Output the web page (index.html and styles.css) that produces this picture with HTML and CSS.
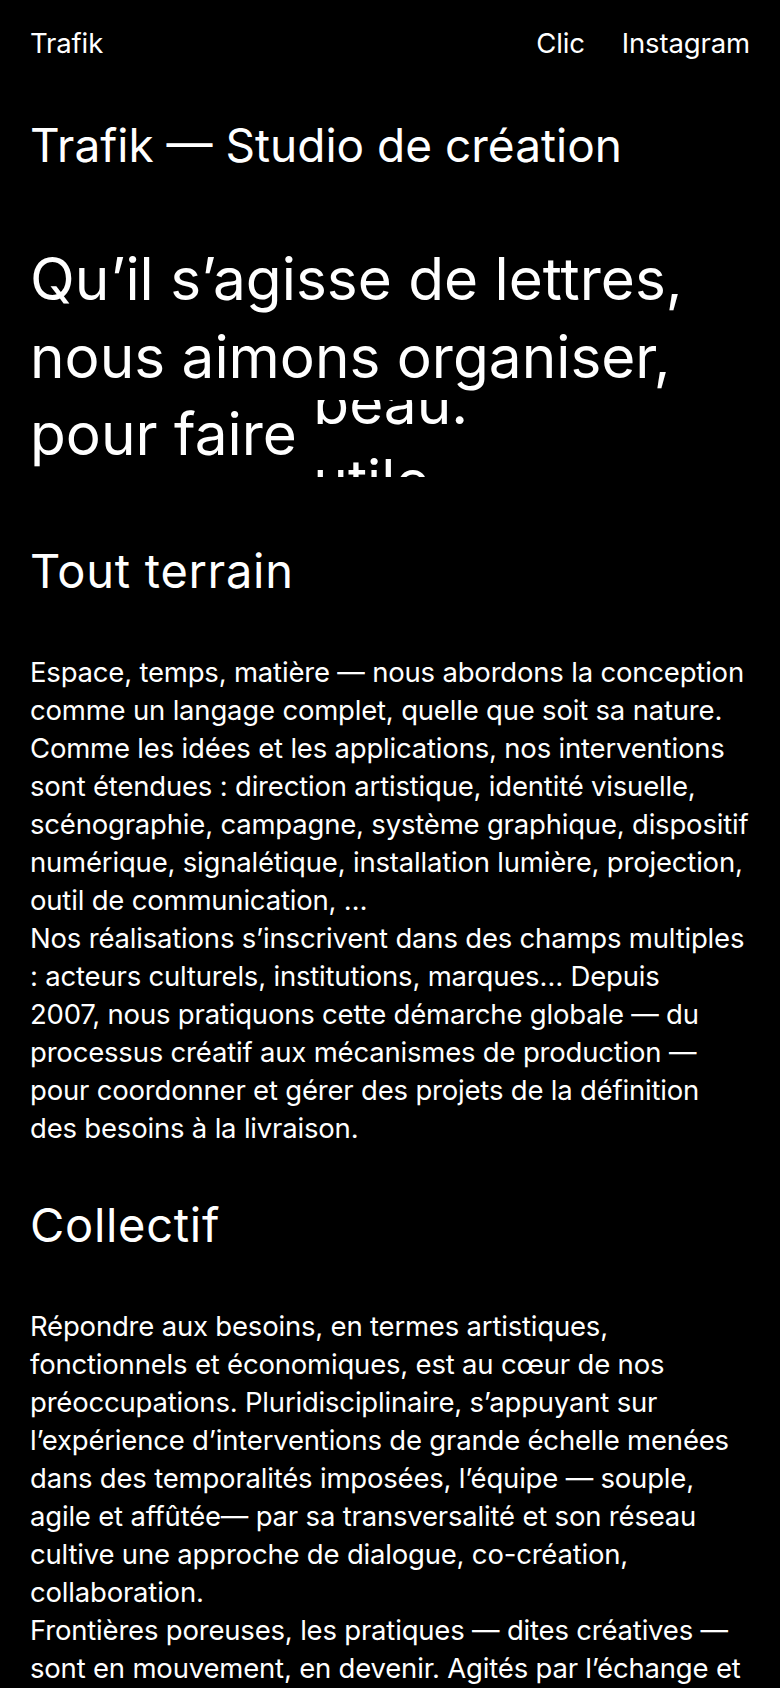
FILE: index.html
```html
<!DOCTYPE html>
<html lang="fr">
<head>
<meta charset="utf-8">
<meta name="viewport" content="width=device-width, initial-scale=1">
<title>Trafik — Studio de création</title>
<link rel="stylesheet" href="styles.css">
</head>
<body>
<header class="site-header">
  <a class="brand" href="#">Trafik</a>
  <nav class="links">
    <a href="#">Clic</a>
    <a href="#">Instagram</a>
  </nav>
</header>
<main class="content">
  <h1 class="title">Trafik — Studio de création</h1>
  <p class="hero">Qu’il s’agisse de lettres, nous aimons organiser, pour faire <span class="ticker"><span class="ticker-track"><span class="ticker-word">beau.</span><span class="ticker-word">utile</span></span></span></p>

  <section class="block block-first">
    <h2 class="block-title">Tout terrain</h2>
    <div class="block-text">
      <p>Espace, temps, matière — nous abordons la conception comme un langage complet, quelle que soit sa nature. Comme les idées et les applications, nos interventions sont étendues : direction artistique, identité visuelle, scénographie, campagne, système graphique, dispositif numérique, signalétique, installation lumière, projection, outil de communication, …</p>
      <p>Nos réalisations s’inscrivent dans des champs multiples : acteurs culturels, institutions, marques… Depuis 2007,&nbsp;nous pratiquons cette démarche globale — du processus créatif aux mécanismes de production — pour coordonner et gérer des projets de la définition des besoins à la livraison.</p>
    </div>
  </section>

  <section class="block">
    <h2 class="block-title">Collectif</h2>
    <div class="block-text">
      <p>Répondre aux besoins, en termes artistiques, fonctionnels et économiques, est au cœur de nos préoccupations. Pluridisciplinaire, s’appuyant sur l’expérience d’interventions de grande échelle menées dans des temporalités imposées, l’équipe — souple, agile et affûtée— par sa transversalité et son réseau cultive une approche de dialogue, co-création, collaboration.</p>
      <p>Frontières poreuses, les pratiques — dites créatives — sont en mouvement, en devenir. Agités par l’échange et le partage.</p>
    </div>
  </section>
</main>
</body>
</html>
```

FILE: styles.css
```css
* { box-sizing: border-box; }

html, body {
  margin: 0;
  padding: 0;
  background: #000;
  color: #fff;
}

body {
  font-family: "Inter", "Roboto", sans-serif;
  font-weight: 400;
  -webkit-font-smoothing: antialiased;
}

a {
  color: inherit;
  text-decoration: none;
}

.site-header {
  display: flex;
  justify-content: space-between;
  align-items: flex-start;
  padding: 26px 30px 0;
  font-size: 27.5px;
  line-height: 34px;
  letter-spacing: -0.005em;
}

.links {
  display: flex;
  gap: 37px;
}

.content {
  padding: 0 30px;
}

.title {
  margin: 57px 0 0;
  font-size: 46px;
  line-height: 56px;
  font-weight: 400;
  letter-spacing: 0;
}

.hero {
  margin: 67px 0 0;
  font-size: 58.5px;
  line-height: 77.5px;
  letter-spacing: 0;
}

.ticker {
  display: inline-block;
  height: 77px;
  overflow: hidden;
  vertical-align: -22px;
}

.ticker-track {
  display: flex;
  flex-direction: column;
  transform: translateY(-36px);
}

.ticker-word {
  display: block;
  line-height: 77.5px;
}

.block {
  margin-top: 50px;
}

.block-first {
  margin-top: 66px;
}

.block-title {
  margin: 0 0 54px;
  font-size: 47px;
  line-height: 56px;
  font-weight: 400;
  letter-spacing: 0.015em;
}

.block-text p {
  margin: 0;
  font-size: 27.5px;
  line-height: 38px;
  letter-spacing: -0.007em;
}
```
